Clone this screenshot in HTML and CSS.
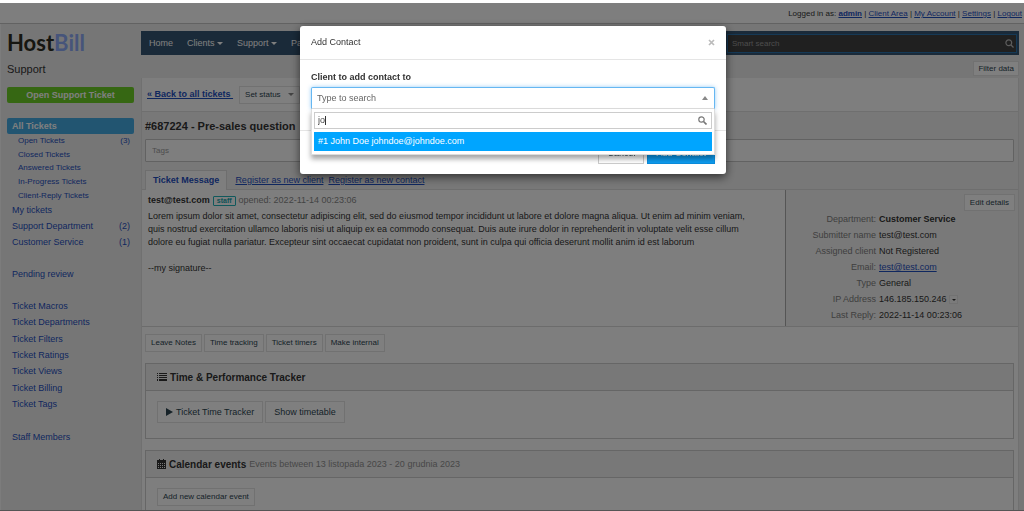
FILE: index.html
```html
<!DOCTYPE html>
<html lang="en">
<head>
<meta charset="utf-8">
<title>HostBill - Support</title>
<link rel="stylesheet" href="styles.css">
</head>
<body>
<div class="page">
  <header class="topbar">
    <span>Logged in as: <a class="strong" href="#">admin</a> | <a href="#">Client Area</a> | <a href="#">My Account</a> | <a href="#">Settings</a> | <a href="#">Logout</a></span>
  </header>
  <div class="layout">
    <aside class="sidebar">
      <div class="logo">Host<span class="logo-accent">Bill</span></div>
      <h2 class="section-name">Support</h2>
      <button class="open-ticket" type="button">Open Support Ticket</button>
      <nav class="side-nav">
        <a class="current" href="#">All Tickets</a>
        <div class="sub-list">
          <a href="#">Open Tickets <span>(3)</span></a>
          <a href="#">Closed Tickets</a>
          <a href="#">Answered Tickets</a>
          <a href="#">In-Progress Tickets</a>
          <a href="#">Client-Reply Tickets</a>
        </div>
        <div class="list">
          <a href="#">My tickets</a>
          <a href="#">Support Department <span>(2)</span></a>
          <a href="#">Customer Service <span>(1)</span></a>
        </div>
        <div class="list"><a href="#">Pending review</a></div>
        <div class="list list-long">
          <a href="#">Ticket Macros</a>
          <a href="#">Ticket Departments</a>
          <a href="#">Ticket Filters</a>
          <a href="#">Ticket Ratings</a>
          <a href="#">Ticket Views</a>
          <a href="#">Ticket Billing</a>
          <a href="#">Ticket Tags</a>
        </div>
        <div class="list"><a href="#">Staff Members</a></div>
      </nav>
    </aside>
    <main class="main">
      <nav class="navbar">
        <a href="#">Home</a>
        <a href="#">Clients <i class="caret"></i></a>
        <a href="#">Support <i class="caret"></i></a>
        <a href="#">Pay</a>
        <label class="smart-search">
          <input type="text" placeholder="Smart search" aria-label="Smart search">
          <svg width="9" height="9" viewBox="0 0 9 9" fill="none" stroke="currentColor" stroke-width="1.2"><circle cx="3.8" cy="3.8" r="2.9"/><path d="M6 6l2.5 2.5"/></svg>
        </label>
      </nav>
      <div class="filter-row"><button class="btn filter" type="button">Filter data</button></div>
      <div class="panel">
        <div class="toolbar">
          <a class="back" href="#">« Back to all tickets&nbsp;</a>
          <button class="btn status" type="button">Set status <i class="caret"></i></button>
        </div>
        <div class="ticket-head">
          <h1>#687224 - Pre-sales question</h1>
          <input class="tags" type="text" placeholder="Tags" aria-label="Tags">
          <div class="tabs">
            <a class="tab" href="#">Ticket Message</a>
            <a class="register" href="#">Register as new client</a>
            <a class="register" href="#">Register as new contact</a>
          </div>
        </div>
        <div class="ticket">
          <article class="message">
            <p class="author"><b>test@test.com</b><span class="badge">staff</span><span class="muted">opened: 2022-11-14 00:23:06</span></p>
            <p>Lorem ipsum dolor sit amet, consectetur adipiscing elit, sed do eiusmod tempor incididunt ut labore et dolore magna aliqua. Ut enim ad minim veniam,<br>quis nostrud exercitation ullamco laboris nisi ut aliquip ex ea commodo consequat. Duis aute irure dolor in reprehenderit in voluptate velit esse cillum<br>dolore eu fugiat nulla pariatur. Excepteur sint occaecat cupidatat non proident, sunt in culpa qui officia deserunt mollit anim id est laborum</p>
            <p class="signature">--my signature--</p>
          </article>
          <aside class="details">
            <button class="btn edit" type="button">Edit details</button>
            <dl>
              <dt>Department:</dt><dd><b>Customer Service</b></dd>
              <dt>Submitter name</dt><dd>test@test.com</dd>
              <dt>Assigned client</dt><dd>Not Registered</dd>
              <dt>Email:</dt><dd><a href="#">test@test.com</a></dd>
              <dt>Type</dt><dd>General</dd>
              <dt>IP Address</dt><dd>146.185.150.246 <button class="ip-menu" type="button" aria-label="IP options"><i class="caret"></i></button></dd>
              <dt>Last Reply:</dt><dd>2022-11-14 00:23:06</dd>
            </dl>
          </aside>
        </div>
        <div class="actions">
          <button class="btn" type="button">Leave Notes</button>
          <button class="btn" type="button">Time tracking</button>
          <button class="btn" type="button">Ticket timers</button>
          <button class="btn" type="button">Make internal</button>
        </div>
        <section class="card">
          <h3><svg width="10" height="8" viewBox="0 0 10 8" fill="currentColor"><path d="M0 0h1v1H0zM2 0h8v1H2zM0 2h1v1H0zM2 2h8v1H2zM0 4h1v1H0zM2 4h8v1H2zM0 6h1v2H0zM2 6h8v2H2z"/></svg>Time &amp; Performance Tracker</h3>
          <div class="card-body">
            <button class="btn large" type="button"><svg width="7" height="8" viewBox="0 0 7 8" fill="currentColor"><path d="M0 0l7 4-7 4z"/></svg>Ticket Time Tracker</button>
            <button class="btn large" type="button">Show timetable</button>
          </div>
        </section>
        <section class="card">
          <h3><svg width="9" height="10" viewBox="0 0 9 10"><path d="M0 1h9v9H0z" fill="currentColor"/><path d="M2 0h1v2H2zM6 0h1v2H6z" fill="currentColor"/><path d="M1 4h1v1H1zM3 4h1v1H3zM5 4h1v1H5zM7 4h1v1H7zM1 6h1v1H1zM3 6h1v1H3zM5 6h1v1H5zM7 6h1v1H7zM1 8h1v1H1zM3 8h1v1H3zM5 8h1v1H5zM7 8h1v1H7z" fill="#eee"/></svg>Calendar events <small>Events between 13 listopada 2023 - 20 grudnia 2023</small></h3>
          <div class="card-body"><button class="btn" type="button">Add new calendar event</button></div>
        </section>
      </div>
    </main>
  </div>
</div>

<div class="overlay">
  <div class="modal" role="dialog" aria-labelledby="modal-title">
    <div class="modal-header">
      <h2 id="modal-title">Add Contact</h2>
      <button class="close" type="button" aria-label="Close"><svg width="7" height="7" viewBox="0 0 7 7" stroke="currentColor" stroke-width="1.7"><path d="M1 1l5 5M6 1l-5 5"/></svg></button>
    </div>
    <div class="modal-body">
      <label for="client">Client to add contact to</label>
      <div class="combo">
        <button id="client" class="combo-toggle" type="button">Type to search<i class="caret up"></i></button>
        <div class="dropdown">
          <div class="search">
            <input type="text" value="jo" aria-label="Search clients">
            <i class="cursor"></i>
            <svg width="9" height="9" viewBox="0 0 9 9" fill="none" stroke="currentColor"><circle cx="3.5" cy="3.5" r="2.7" stroke-width="1.2"/><path d="M5.5 5.5l3 3" stroke-width="1.7"/></svg>
          </div>
          <div class="option" role="option" aria-selected="true">#1 John Doe johndoe@johndoe.com</div>
        </div>
      </div>
    </div>
    <div class="modal-footer">
      <button class="btn cancel" type="button">Cancel</button>
      <button class="btn submit" type="button">Add Contact</button>
    </div>
  </div>
</div>
</body>
</html>
```
FILE: styles.css
```css
* { box-sizing: border-box; }
html { background: #fff; }
body {
  margin: 0;
  padding-top: 3px;
  height: 100vh;
  overflow: hidden;
  font: 9px/13px "Liberation Sans", Arial, sans-serif;
  color: #333;
}
h1, h2, h3, p, dl, dd { margin: 0; }
a { color: #1f4fbf; }
button, input { font: inherit; color: inherit; margin: 0; }
button { white-space: nowrap; }
svg { flex: none; }

.page { background: #ededed; min-height: 100vh; }
.topbar {
  display: flex;
  justify-content: flex-end;
  align-items: center;
  height: 21px;
  padding-right: 2px;
  background: #fdfdfd;
  border-top: 1px solid #fff;
  border-bottom: 1px solid #c4c4c4;
  font-size: 8px;
}
.strong { font-weight: bold; }
.layout { display: grid; grid-template-columns: 141px minmax(0, 1fr); }

.sidebar { padding: 7px 7px 0 6px; border-left: 1px solid #f8f8f8; }
.logo {
  font: bold 22px/24px Lato, "Open Sans", sans-serif;
  color: #2d2d22;
}
.logo-accent { color: #8ca9f5; }
.section-name { margin-top: 7px; font-size: 11px; line-height: 14px; font-weight: normal; }
.open-ticket {
  display: block;
  width: 100%;
  height: 16px;
  margin-top: 11px;
  padding: 0;
  border: 0;
  border-radius: 2px;
  background: #6dce26;
  color: #fff;
  font-weight: bold;
}
.side-nav { margin-top: 15px; }
.side-nav a { display: flex; justify-content: space-between; align-items: center; text-decoration: none; }
.side-nav .current {
  height: 16px;
  padding-left: 5px;
  border-radius: 2px;
  background: #45abe3;
  color: #fff;
  font-weight: bold;
}
.sub-list { display: flex; flex-direction: column; min-height: 68px; padding: 0 4px 0 11px; font-size: 8px; }
.sub-list a { flex: 1; }
.list { display: flex; flex-direction: column; padding: 0 4px 0 5px; margin-bottom: 16px; }
.list a { flex: 1; min-height: 16px; }
.list-long { min-height: 115px; }

.main { padding: 7px 5px 0 0; }
.navbar {
  display: flex;
  align-items: center;
  gap: 14px;
  height: 24px;
  padding-left: 8px;
  background: #345472;
}
.navbar a { color: #fff; text-decoration: none; }
.caret {
  display: inline-block;
  border: 3px solid transparent;
  border-top-color: currentColor;
  border-bottom: 0;
  vertical-align: middle;
}
.caret.up { border-top: 0; border-bottom: 4px solid currentColor; }
.smart-search {
  display: flex;
  align-items: center;
  width: 290px;
  height: 19px;
  margin-left: auto;
  margin-right: 2px;
  padding: 0 2px 0 4px;
  border: 1px solid #2b72ad;
  background: #414141;
  color: #bbb;
  font-size: 8px;
}
.smart-search input { flex: 1; min-width: 0; border: 0; padding: 0; background: none; }
.smart-search input::placeholder { color: #999; opacity: 1; }
.filter-row { display: flex; justify-content: flex-end; padding: 6px 0 2px; }
.btn {
  height: 18px;
  padding: 0 5px;
  border: 1px solid #e2e2e2;
  background: #fff;
  color: #2c4450;
  font-size: 8px;
  line-height: 12px;
}
.filter { height: 15px; padding: 0 4px; }

.panel { background: #fdfdfd; border: solid #e0e0e0; border-width: 0 1px; min-height: 434px; }
.toolbar { display: flex; align-items: center; gap: 6px; height: 34px; padding-left: 5px; border-bottom: 1px solid #dedede; }
.back { font-weight: bold; }
.status { display: flex; align-items: center; gap: 7px; }
.status .caret { color: #888; }
.ticket-head { padding: 7px 4px 0 3px; background: #f0f0f0; border-bottom: 1px solid #dcdcdc; }
h1 { font-size: 11px; line-height: 14px; }
.tags { display: block; width: 100%; height: 23px; margin-top: 6px; padding: 0 6px; border: 1px solid #c4c4c4; border-radius: 1px; background: #fdfdfd; font-size: 8px; }
.tags::placeholder { color: #999; opacity: 1; }
.tabs { display: flex; align-items: center; gap: 5px; margin-top: 9px; height: 18px; }
.tab {
  height: 20px;
  margin-right: 3px;
  padding: 3px 7px;
  border: 1px solid #ddd;
  border-bottom: 0;
  background: #fdfdfd;
  font-weight: bold;
  text-decoration: none;
}
.ticket { display: grid; grid-template-columns: minmax(0, 643fr) minmax(0, 233fr); min-height: 137px; border-bottom: 1px solid #d8d8d8; }
.message { padding: 4px 6px; }
.author { display: flex; align-items: center; gap: 3px; margin-bottom: 3px; }
.badge { padding: 0 3px; border: 1px solid #20b2b8; border-radius: 1px; color: #16a3ab; font-size: 7px; line-height: 8px; font-weight: bold; }
.muted { color: #888; }
.signature { margin-top: 13px; }
.details { background: #f2f2f2; border-left: 1px solid #aaa; padding-top: 4px; }
.edit { display: block; height: 17px; margin: 0 3px 0 auto; }
dl { display: grid; grid-template-columns: 90px 1fr; column-gap: 3px; line-height: 16px; }
dt { text-align: right; color: #808080; }
.ip-menu { width: 9px; height: 9px; padding: 0; border: 1px solid #e4e4e4; background: #f6f6f6; line-height: 4px; }
.ip-menu .caret { border-width: 2px; border-bottom: 0; }
.actions { display: flex; gap: 2px; padding: 7px 3px 11px; }
.card { margin: 0 4px 11px 3px; border: 1px solid #ccc; }
.card h3 { display: flex; align-items: center; gap: 3px; height: 27px; padding-left: 11px; background: #f0f0f0; border-bottom: 1px solid #ccc; font-size: 10px; }
small { font-size: 9px; font-weight: normal; color: #909090; }
.card-body { display: flex; gap: 2px; padding: 10px 11px 15px; }
.large { display: flex; align-items: center; gap: 3px; height: 22px; padding: 0 8px; font-size: 9px; }

.overlay {
  position: fixed;
  inset: 3px 0 0;
  display: flex;
  justify-content: center;
  align-items: flex-start;
  padding: 23px 16px 0 18px;
  background: rgba(0, 0, 0, 0.5);
  border-bottom: 1px solid #555;
}
.modal { width: 426px; max-width: 100%; background: #fff; border-radius: 3px; box-shadow: 0 3px 10px rgba(0, 0, 0, 0.6); }
.modal-header { display: flex; justify-content: space-between; align-items: center; height: 34px; padding: 0 11px; border-bottom: 1px solid #e5e5e5; }
.modal-header h2 { font-size: 9px; font-weight: normal; }
.close { display: flex; padding: 0; border: 0; background: none; color: #bbb; }
.modal-body { padding: 11px 11px 21px; border-bottom: 1px solid #e5e5e5; }
.modal-body label { display: block; margin-bottom: 3px; font-weight: bold; }
.combo { position: relative; }
.combo-toggle {
  display: flex;
  justify-content: space-between;
  align-items: center;
  width: 100%;
  height: 22px;
  padding: 0 6px 0 5px;
  border: 1px solid #66b7f2;
  border-bottom-color: #ddd;
  border-radius: 2px 2px 0 0;
  background: #fff;
  color: #666;
  box-shadow: 0 0 4px rgba(80, 170, 240, 0.6);
}
.combo-toggle .caret { border-width: 0 3px 4px; color: #888; }
.dropdown {
  position: absolute;
  top: 100%;
  left: 0;
  right: 0;
  padding: 3px 2px;
  background: #fff;
  border: 1px solid #ddd;
  border-top: 0;
  box-shadow: 0 4px 5px rgba(0, 0, 0, 0.35);
}
.search { position: relative; display: flex; align-items: center; height: 17px; margin-bottom: 3px; padding: 0 4px 0 3px; border: 1px solid #ccc; color: #777; }
.search input { flex: 1; min-width: 0; padding: 0; border: 0; outline: 0; color: #444; }
.cursor { position: absolute; left: 10px; top: 3px; width: 1px; height: 9px; background: #333; }
.option { padding: 3px 4px; background: #00a5ff; color: #fff; }
.modal-footer { display: flex; justify-content: flex-end; gap: 3px; padding: 11px 11px 10px; }
.cancel, .submit { height: 22px; padding: 0 8px; font-size: 9px; }
.cancel { border-color: #ccc; }
.submit { background: #0d9cf0; border-color: #0b8cdc; color: #fff; }
```
